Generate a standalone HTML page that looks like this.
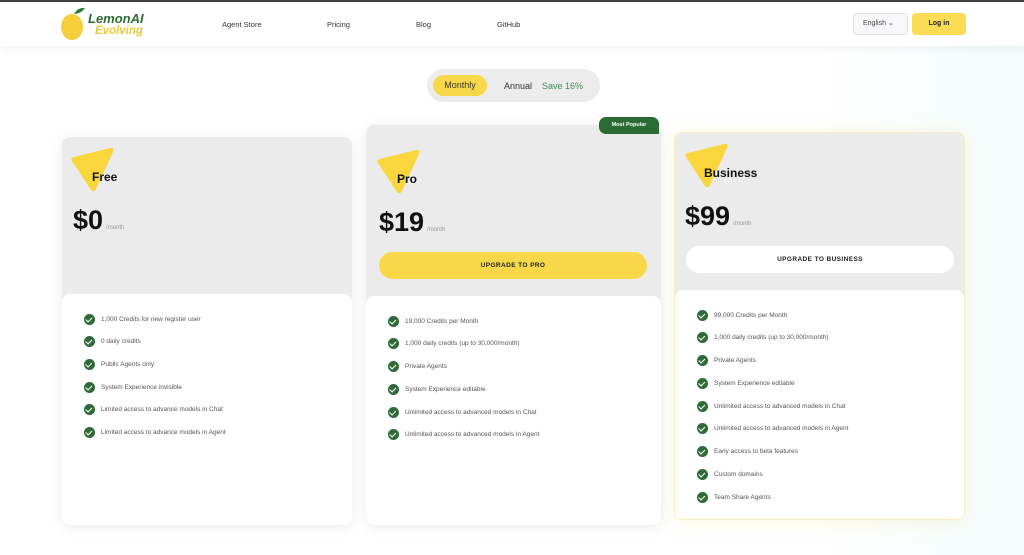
<!DOCTYPE html>
<html><head><meta charset="utf-8"><style>
*{margin:0;padding:0;box-sizing:border-box}
body{width:1024px;height:555px;overflow:hidden;background:linear-gradient(90deg,#fff 0%,#fff 80%,#f3fbfb 100%);font-family:"Liberation Sans",sans-serif;position:relative;color:#222}
.top{position:absolute;left:0;top:0;width:1024px;height:2px;background:#444}
.nav{position:absolute;left:0;top:2px;width:1024px;height:44px;background:#fff;box-shadow:0 3px 8px rgba(0,0,0,.05)}
.abs{position:absolute}
.navl{font-size:7.5px;color:#333}
.card{position:absolute;background:#fff;border-radius:8px;box-shadow:0 2px 14px rgba(0,0,0,.08);overflow:hidden}
.head{position:absolute;left:0;top:0;right:0;background:#ebebeb}
.body{position:absolute;left:0;right:0;bottom:0;background:#fff;border-radius:8px 8px 0 0}
.tri{position:absolute}
.name{position:absolute;font-weight:bold;font-size:12px;color:#111}
.price{position:absolute;font-weight:bold;font-size:27px;color:#111}
.per{font-size:6px;color:#999;font-weight:normal;margin-left:3px}
.btn{position:absolute;border-radius:14px;font-size:6.5px;font-weight:bold;letter-spacing:.4px;text-align:center;color:#222}
.f{position:absolute;left:22px;font-size:6.5px;color:#555;display:flex;align-items:center;height:12px}
.f i{display:inline-block;width:11px;height:11px;border-radius:50%;background:#2e6b38;margin-right:6px;position:relative}
.f i:after{content:"";position:absolute;left:3.3px;top:2.2px;width:2.6px;height:4.6px;border:solid #fff;border-width:0 1.5px 1.5px 0;transform:rotate(45deg)}
</style></head><body>
<div class="top"></div>
<div class="nav">
 <svg class="abs" style="left:60px;top:3px" width="26" height="38" viewBox="0 0 26 38"><ellipse cx="12" cy="22" rx="11" ry="13" fill="#f5cf3a"/><path d="M14 9 Q18 2 25 3 Q21 9 14 9Z" fill="#2f7a36"/></svg>
 <div class="abs" style="left:88px;top:9px;font-weight:bold;font-style:italic;font-size:13px;color:#2f6b35">LemonAI</div>
 <div class="abs" style="left:95px;top:23px;font-weight:bold;font-style:italic;font-size:11.5px;color:#e8c93a">Evolving</div>
 <div class="abs navl" style="left:222px;top:18px">Agent Store</div>
 <div class="abs navl" style="left:327px;top:18px">Pricing</div>
 <div class="abs navl" style="left:416px;top:18px">Blog</div>
 <div class="abs navl" style="left:497px;top:18px">GitHub</div>
 <div class="abs" style="left:853px;top:11px;width:55px;height:22px;border:1px solid #e2e2e2;border-radius:4px;background:#f8f8fa;font-size:7px;color:#444;line-height:20px;padding-left:9px">English &#8964;</div>
 <div class="abs" style="left:912px;top:11px;width:54px;height:22px;border-radius:4px;background:#fbdc55;font-size:7px;font-weight:bold;text-align:center;line-height:22px">Log in</div>
</div>
<div class="abs" style="left:427px;top:69px;width:173px;height:33px;border-radius:17px;background:#ececec"></div>
<div class="abs" style="left:433px;top:75px;width:54px;height:21px;border-radius:11px;background:#f8d848;font-size:9px;line-height:21px;text-align:center;color:#333">Monthly</div>
<div class="abs" style="left:504px;top:81px;font-size:9px;color:#333">Annual</div>
<div class="abs" style="left:542px;top:81px;font-size:9px;color:#3f8a55">Save 16%</div>

<div class="card" style="left:62px;top:137px;width:290px;height:388px">
 <div class="head" style="height:170px"></div>
 <svg class="tri" style="left:6px;top:8px" width="50" height="52"><path d="M4 16 Q2 13 6 12 L42 3 Q47 2 45 7 L28 44 Q26 48 23 45Z" fill="#f8d63c"/></svg>
 <div class="name" style="left:30px;top:33px">Free</div>
 <div class="price" style="left:11px;top:68px">$0<span class="per">/month</span></div>
 <div class="body" style="top:157px"></div>
 <div class="f" style="top:176px"><i></i>1,000 Credits for new register user</div>
 <div class="f" style="top:198px"><i></i>0 daily credits</div>
 <div class="f" style="top:221px"><i></i>Public Agents only</div>
 <div class="f" style="top:244px"><i></i>System Experience invisible</div>
 <div class="f" style="top:266px"><i></i>Limited access to advance models in Chat</div>
 <div class="f" style="top:289px"><i></i>Limited access to advance models in Agent</div>
</div>

<div class="card" style="left:366px;top:125px;width:295px;height:400px;overflow:visible">
 <div class="head" style="height:180px;border-radius:8px 8px 0 0"></div>
 <svg class="tri" style="left:8px;top:22px" width="50" height="52"><path d="M4 16 Q2 13 6 12 L42 3 Q47 2 45 7 L28 44 Q26 48 23 45Z" fill="#f8d63c"/></svg>
 <div class="name" style="left:31px;top:47px">Pro</div>
 <div class="price" style="left:13px;top:82px">$19<span class="per">/month</span></div>
 <div class="btn" style="left:13px;top:127px;width:268px;height:27px;line-height:27px;background:#f8d848">UPGRADE TO PRO</div>
 <div class="body" style="top:171px;border-radius:8px"></div>
 <div class="abs" style="left:233px;top:-8px;width:60px;height:17px;background:#2b6b34;border-radius:7px 7px 0 7px;color:#fff;font-size:5.5px;font-weight:bold;text-align:center;line-height:17px">Most Popular</div>
 <div class="f" style="top:190px"><i></i>19,000 Credits per Month</div>
 <div class="f" style="top:212px"><i></i>1,000 daily credits (up to 30,000/month)</div>
 <div class="f" style="top:235px"><i></i>Private Agents</div>
 <div class="f" style="top:258px"><i></i>System Experience editable</div>
 <div class="f" style="top:281px"><i></i>Unlimited access to advanced models in Chat</div>
 <div class="f" style="top:303px"><i></i>Unlimited access to advanced models in Agent</div>
</div>

<div class="card" style="left:674px;top:132px;width:291px;height:388px;border:1px solid #f6eebb;box-shadow:0 2px 18px rgba(240,220,120,.25)">
 <div class="head" style="height:170px"></div>
 <svg class="tri" style="left:7px;top:8px" width="50" height="52"><path d="M4 16 Q2 13 6 12 L42 3 Q47 2 45 7 L28 44 Q26 48 23 45Z" fill="#f8d63c"/></svg>
 <div class="name" style="left:29px;top:33px">Business</div>
 <div class="price" style="left:10px;top:68px">$99<span class="per">/month</span></div>
 <div class="btn" style="left:11px;top:113px;width:268px;height:27px;line-height:27px;background:#fff">UPGRADE TO BUSINESS</div>
 <div class="body" style="top:157px;border-radius:8px"></div>
 <div class="f" style="top:176px"><i></i>99,000 Credits per Month</div>
 <div class="f" style="top:198px"><i></i>1,000 daily credits (up to 30,000/month)</div>
 <div class="f" style="top:221px"><i></i>Private Agents</div>
 <div class="f" style="top:244px"><i></i>System Experience editable</div>
 <div class="f" style="top:267px"><i></i>Unlimited access to advanced models in Chat</div>
 <div class="f" style="top:289px"><i></i>Unlimited access to advanced models in Agent</div>
 <div class="f" style="top:312px"><i></i>Early access to beta features</div>
 <div class="f" style="top:335px"><i></i>Custom domains</div>
 <div class="f" style="top:358px"><i></i>Team Share Agents</div>
</div>
</body></html>
